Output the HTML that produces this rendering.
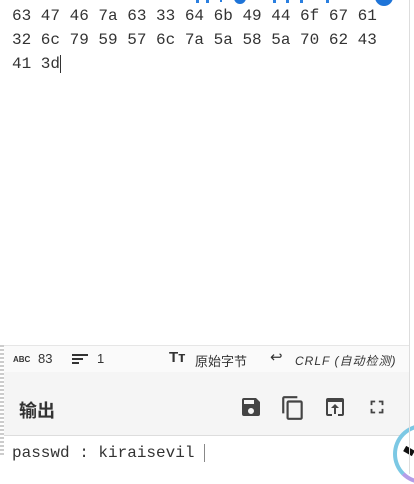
<!DOCTYPE html>
<html><head><meta charset="utf-8"><style>
*{margin:0;padding:0;box-sizing:border-box}
body{width:414px;height:474px;overflow:hidden;background:#fff;font-family:"Liberation Sans","Noto Sans CJK SC",sans-serif;position:relative}
.edge{position:absolute;left:409px;top:0;width:1px;height:474px;background:#ddd}
.mono{font-family:"Liberation Mono","DejaVu Sans Mono",monospace;font-size:16px;color:#333;position:absolute;left:12px;top:4px;line-height:24px;white-space:pre}
.status{position:absolute;left:4px;top:345px;width:405px;height:27px;background:#fafafa;border-top:1px solid #e6e6e6;font-size:13px;color:#333}
.status span{position:absolute;top:5px}
.out{position:absolute;left:4px;top:372px;width:405px;height:64px;background:#f5f5f5;border-bottom:1px solid #ddd}
.grip{position:absolute;left:0;top:345px;width:4px;height:110px;background:repeating-linear-gradient(#ccc 0 2px,transparent 2px 4px)}
</style></head><body>
<div class="mono">63 47 46 7a 63 33 64 6b 49 44 6f 67 61
32 6c 79 59 57 6c 7a 5a 58 5a 70 62 43
41 3d<span style="border-left:1px solid #333;margin-left:0"></span></div>
<svg style="position:absolute;left:0;top:0" width="414" height="8"><g fill="#2a7fe0"><rect x="196" y="0" width="3" height="3"/><rect x="206" y="0" width="3" height="3"/><rect x="220" y="0" width="2" height="2"/><rect x="273" y="0" width="3" height="3"/><rect x="286" y="0" width="3" height="3"/><rect x="300" y="0" width="3" height="3"/><rect x="326" y="0" width="3" height="3"/></g><circle cx="384" cy="-3" r="9" fill="#1e74d8"/><circle cx="240" cy="-2" r="6" fill="#1e74d8"/></svg>
<div class="status">
<span style="left:9px;font-size:8px;font-weight:bold;top:9px">ABC</span><span style="left:34px">83</span>
<svg style="position:absolute;left:68px;top:8px" width="16" height="11"><rect y="0" width="16" height="2" fill="#333"/><rect y="4" width="11" height="2" fill="#333"/><rect y="8" width="7" height="2" fill="#333"/></svg>
<span style="left:93px">1</span>
<span style="left:165px;font-weight:bold;font-size:15px;top:3px">Tт</span>
<span style="left:191px">原始字节</span>
<span style="left:266px;font-size:15px;top:2px">↩</span>
<span style="left:291px;font-style:italic;font-size:12px;top:6px;letter-spacing:1px">CRLF (自动检测)</span>
</div>
<div style="position:absolute;left:188px;top:374px;width:38px;height:2px;background:repeating-linear-gradient(90deg,#ccc 0 2px,transparent 2px 4px)"></div>
<div class="out">
<div style="position:absolute;left:15px;top:25px;font-size:18px;font-weight:bold;color:#333">输出</div>
<svg style="position:absolute;left:235px;top:23px" width="24" height="24" viewBox="0 0 24 24"><path fill="#444" d="M17 3H5a2 2 0 0 0-2 2v14a2 2 0 0 0 2 2h14a2 2 0 0 0 2-2V7l-4-4zm-5 16a3 3 0 1 1 0-6 3 3 0 0 1 0 6zm3-10H5V5h10v4z"/></svg>
<svg style="position:absolute;left:276px;top:22px" width="26" height="28" viewBox="0 0 24 24"><path fill="#444" d="M16 1H4a2 2 0 0 0-2 2v14h2V3h12V1zm3 4H8a2 2 0 0 0-2 2v14a2 2 0 0 0 2 2h11a2 2 0 0 0 2-2V7a2 2 0 0 0-2-2zm0 16H8V7h11v14z"/></svg>
<svg style="position:absolute;left:319px;top:23px" width="24" height="24" viewBox="0 0 24 24"><path fill="#444" d="M19 3H5a2 2 0 0 0-2 2v14a2 2 0 0 0 2 2h4v-2H5V7h14v12h-4v2h4a2 2 0 0 0 2-2V5a2 2 0 0 0-2-2zm-7 6l-4 4h3v6h2v-6h3l-4-4z"/></svg>
<svg style="position:absolute;left:362px;top:24px" width="22" height="22" viewBox="0 0 24 24"><path fill="#444" d="M7 14H5v5h5v-2H7v-3zm-2-4h2V7h3V5H5v5zm12 7h-3v2h5v-5h-2v3zM14 5v2h3v3h2V5h-5z"/></svg>
</div>
<div style="position:absolute;left:12px;top:444px;font-family:'Liberation Mono','DejaVu Sans Mono',monospace;font-size:16px;color:#333;white-space:pre">passwd : kiraisevil <span style="border-left:1px solid #888"></span></div>
<div style="position:absolute;left:393px;top:424px;width:60px;height:60px;border-radius:50%;border:4px solid #7cc8e4;border-bottom-color:#b49de8;background:#fff"></div>
<div style="position:absolute;left:404px;top:448px;width:10px;height:6px;background:#111;transform:rotate(30deg)"></div>
<div class="edge"></div>
<div class="grip"></div>
</body></html>
